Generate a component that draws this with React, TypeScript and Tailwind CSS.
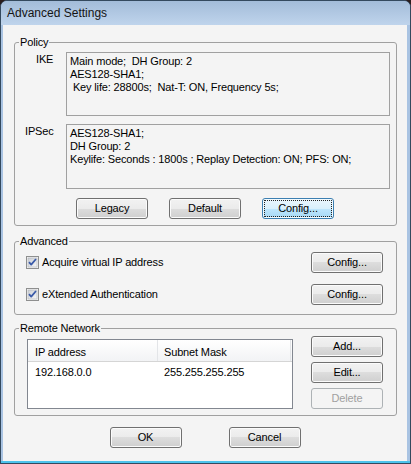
import type { ReactNode } from "react";

type ButtonProps = {
  label: string;
  focused?: boolean;
  disabled?: boolean;
  className?: string;
};

function Button({ label, focused, disabled, className = "" }: ButtonProps) {
  let look =
    "border-[#707070] bg-[linear-gradient(to_bottom,#f2f2f2_0%,#ebebeb_50%,#dddddd_50%,#cfcfcf_100%)] shadow-[inset_0_0_0_1px_#fbfbfb] text-black";
  if (focused) {
    look =
      "border-[#3c7fb1] bg-[linear-gradient(to_bottom,#eaf6fd_0%,#d9f0fc_50%,#bee6fd_50%,#a7d9f5_100%)] shadow-[inset_0_0_0_1px_#f4fbfe] text-black outline-1 outline-dotted outline-[#222] -outline-offset-3";
  }
  if (disabled) {
    look = "border-[#adb2b5] bg-[#f4f4f4] text-[#a0a0a0]";
  }
  return (
    <button
      type="button"
      disabled={disabled}
      className={`flex h-[21px] w-[72px] shrink-0 items-center justify-center rounded-[3px] border ${look} ${className}`}
    >
      {label}
    </button>
  );
}

function GroupBox({ title, className = "", children }: { title: string; className?: string; children: ReactNode }) {
  return (
    <fieldset className={`w-[383px] rounded-[3px] border border-[#a0a0a0] ${className}`}>
      <legend className="ml-[4px] px-[1px]">{title}</legend>
      {children}
    </fieldset>
  );
}

function CheckBox() {
  return (
    <svg width="13" height="13" viewBox="0 0 13 13" className="shrink-0">
      <defs>
        <linearGradient id="cbFill" x1="0" y1="0" x2="1" y2="1">
          <stop offset="0" stopColor="#cbcfd5" />
          <stop offset="1" stopColor="#f7f7f7" />
        </linearGradient>
      </defs>
      <rect x="0.5" y="0.5" width="12" height="12" fill="#f4f4f4" stroke="#8e8f8f" />
      <rect x="2" y="2" width="9" height="9" fill="url(#cbFill)" stroke="#aeb3b9" strokeWidth="0.6" />
      <path d="M3 6.2 L5.2 8.6 L10 3" fill="none" stroke="#3a5aa8" strokeWidth="1.8" strokeLinejoin="round" />
    </svg>
  );
}

const ikeLines = ["Main mode;  DH Group: 2", "AES128-SHA1;", " Key life: 28800s;  Nat-T: ON, Frequency 5s;"];
const ipsecLines = ["AES128-SHA1;", "DH Group: 2", "Keylife: Seconds : 1800s ; Replay Detection: ON; PFS: ON;"];

function InfoBox({ lines, tall }: { lines: string[]; tall?: boolean }) {
  return (
    <div
      className={`w-[324px] border border-[#a0a0a0] pl-[3px] pt-[2px] whitespace-pre ${tall ? "h-[65px]" : "h-[64px]"}`}
    >
      {lines.map((l) => (
        <div key={l}>{l}</div>
      ))}
    </div>
  );
}

export default function App() {
  return (
    <div className="h-[464px] w-[411px] bg-[#2a1c1c] font-['Liberation_Sans',Arial,sans-serif] text-[11px] leading-[13px] tracking-[-0.15px] text-black">
      <div className="flex h-full flex-col rounded-t-[7px] border border-[#34495e] bg-[#a9c3e2]">
        {/* title bar */}
        <div className="flex h-[24px] shrink-0 items-center rounded-t-[6px] bg-gradient-to-b from-[#a3bcd9] to-[#bfd4ec] pl-[6px] text-[12px] leading-[14px] tracking-normal text-[#141414]">
          Advanced Settings
        </div>

        <div className="ml-[2px] mr-[3px] flex flex-1 flex-col bg-[#f4f4f4] pl-[11px]">
          <GroupBox title="Policy" className="mt-[11px] pb-[6px]">
            <div className="mt-[3px] flex">
              <div className="w-[51px] pl-[21px] pt-[1px]">IKE</div>
              <InfoBox lines={ikeLines} />
            </div>
            <div className="mt-[8px] flex">
              <div className="w-[51px] pl-[10px] pt-[1px]">IPSec</div>
              <InfoBox lines={ipsecLines} tall />
            </div>
            <div className="ml-[61px] mt-[9px] flex gap-[21px]">
              <Button label="Legacy" />
              <Button label="Default" />
              <Button label="Config..." focused />
            </div>
          </GroupBox>

          <GroupBox title="Advanced" className="mt-[9px] pb-[9px]">
            <div className="mt-[4px] flex items-center pl-[11px] pr-[13px]">
              <CheckBox />
              <span className="ml-[3px]">Acquire virtual IP address</span>
              <Button label="Config..." className="ml-auto" />
            </div>
            <div className="mt-[11px] flex items-center pl-[11px] pr-[13px]">
              <CheckBox />
              <span className="ml-[3px]">eXtended Authentication</span>
              <Button label="Config..." className="ml-auto" />
            </div>
          </GroupBox>

          <GroupBox title="Remote Network" className="mt-[7px] pb-[6px]">
            <div className="flex items-start pl-[12px] pr-[13px]">
              <div className="mt-[4px] flex h-[70px] w-[266px] flex-col border border-[#828790] bg-white">
                <div className="flex h-[22px] shrink-0 border-b border-[#d5d5d5] bg-gradient-to-b from-white to-[#f2f3f5]">
                  <div className="w-[130px] border-r border-[#e3e5e8] pl-[7px] pt-[6px]">IP address</div>
                  <div className="w-[133px] border-r border-[#e3e5e8] pl-[6px] pt-[6px]">Subnet Mask</div>
                </div>
                <div className="flex pt-[4px]">
                  <div className="w-[130px] pl-[7px]">192.168.0.0</div>
                  <div className="pl-[6px]">255.255.255.255</div>
                </div>
              </div>
              <div className="ml-auto mt-[1px] flex flex-col gap-[5px]">
                <Button label="Add..." />
                <Button label="Edit..." />
                <Button label="Delete" disabled />
              </div>
            </div>
          </GroupBox>

          <div className="mt-[11px] flex justify-center gap-[47px] pr-[11px]">
            <Button label="OK" />
            <Button label="Cancel" />
          </div>
        </div>
        <div className="h-[2px] shrink-0 bg-[#4cc3ec]" />
      </div>
    </div>
  );
}
